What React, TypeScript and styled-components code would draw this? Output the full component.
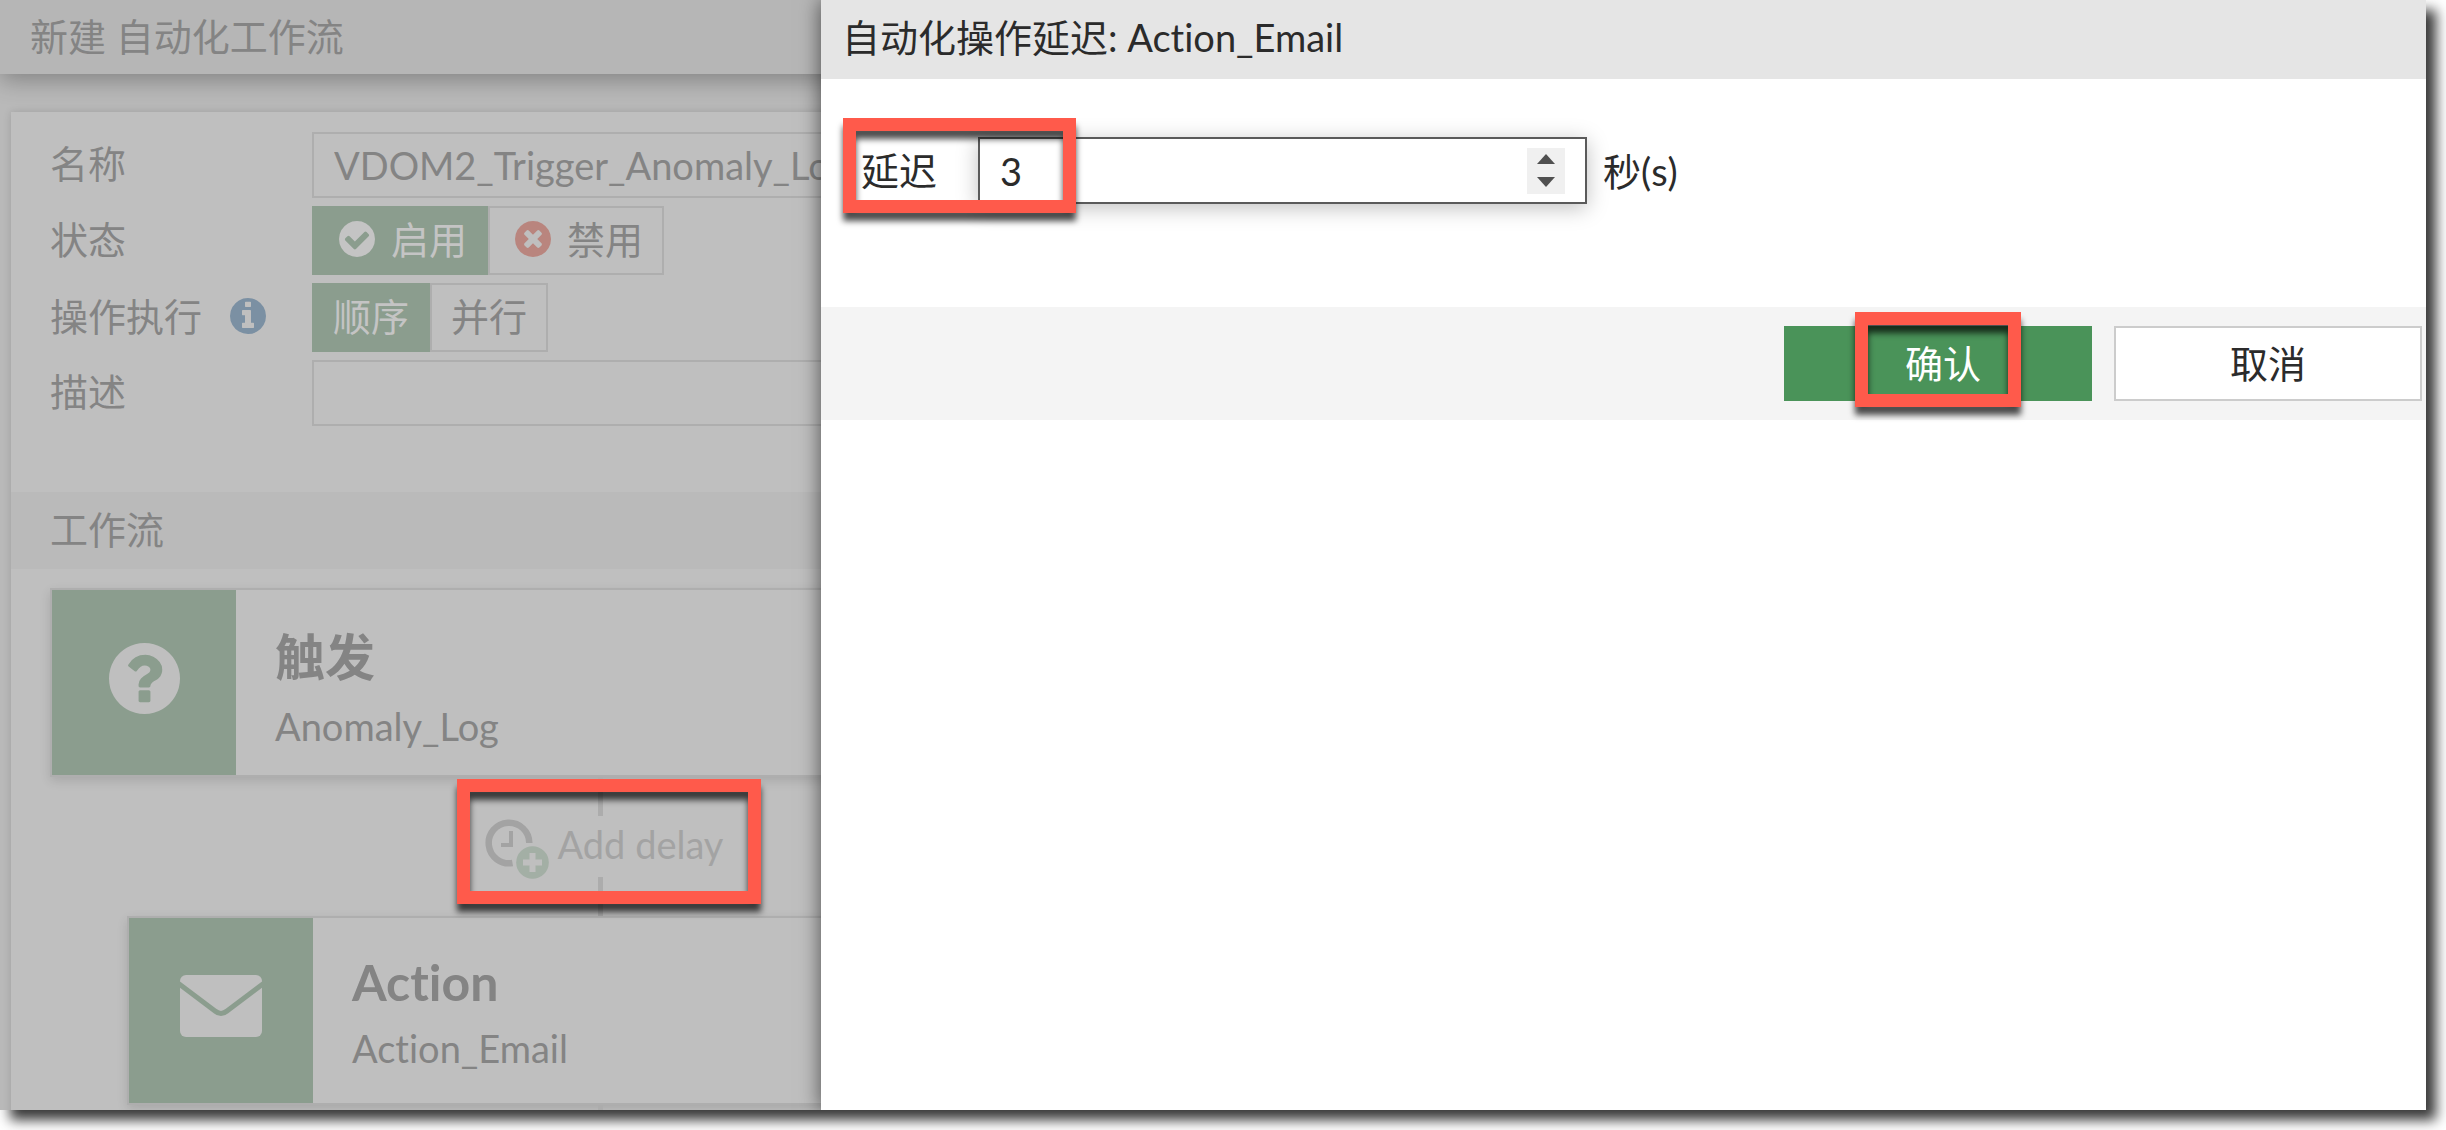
import React, { useState } from "react";
import styled, { createGlobalStyle } from "styled-components";

const GlobalStyle = createGlobalStyle`
  * { box-sizing: border-box; }
  body {
    margin: 0;
    background: #fff;
    font-family: Lato, "Noto Sans CJK SC", sans-serif;
    font-size: 38px;
    line-height: 48px;
    font-variant-ligatures: none;
    color: #2b2b2b;
  }
  button, input { font: inherit; color: inherit; }
`;

const Page = styled.div`
  height: 100vh;
  padding: 0 20px 20px 0;
  overflow: hidden;
`;

const Window = styled.div`
  position: relative;
  height: 100%;
  background: #b9b9b9;
  color: #848484;
  box-shadow: 10px 10px 12px rgba(0, 0, 0, 0.78);
`;

const Workspace = styled.main`
  height: 100%;
  overflow: hidden;
  display: flex;
  flex-direction: column;
`;

const PageHeader = styled.header`
  flex: none;
  height: 74px;
  padding: 12px 30px;
  background: #b6b6b6;
  box-shadow: 0 6px 24px rgba(0, 0, 0, 0.3);
`;

const Title = styled.h1`
  margin: 0;
  font-size: 38px;
  line-height: 48px;
  font-weight: 400;
`;

const Panel = styled.section`
  flex: none;
  margin: 38px 11px 0;
  padding-top: 20px;
  background: #bfbfbf;
  box-shadow: 0 0 8px rgba(0, 0, 0, 0.14);
`;

const Form = styled.form`
  display: grid;
  grid-template-columns: 262px 1fr;
  row-gap: 8px;
  align-items: center;
  padding: 0 39px 66px;
`;

const Label = styled.label`
  display: flex;
  align-items: center;
  gap: 28px;
  padding-bottom: 4px;
`;

const TextField = styled.input`
  width: 100%;
  height: 66px;
  padding: 0 20px;
  border: 2px solid #aeaeae;
  background: transparent;
  outline: none;
`;

const Segments = styled.div`
  display: flex;
`;

const Segment = styled.button<{ $on?: boolean }>`
  display: flex;
  align-items: center;
  gap: 16px;
  height: 69px;
  padding: 0 19px 3px;
  border: 2px solid ${(p) => (p.$on ? "#8b9d8e" : "#aeaeae")};
  background: ${(p) => (p.$on ? "#8b9d8e" : "transparent")};
  color: ${(p) => (p.$on ? "#c4c4c4" : "#848484")};
`;

const IconSegment = styled(Segment)`
  padding-left: 25px;
`;

const SectionTitle = styled.h2`
  margin: 0;
  height: 77px;
  padding: 13px 39px;
  background: #bababa;
  font-size: 38px;
  line-height: 48px;
  font-weight: 400;
`;

const Flow = styled.div`
  display: flex;
  flex-direction: column;
  width: 1101px;
  margin: 19px 39px 0;
`;

const Card = styled.article<{ $inset?: boolean }>`
  display: flex;
  height: 189px;
  margin: 0 ${(p) => (p.$inset ? 77 : 0)}px;
  border: 2px solid #aeaeae;
  box-shadow: 0 4px 10px rgba(0, 0, 0, 0.12);
`;

const CardIcon = styled.div`
  display: flex;
  align-items: center;
  justify-content: center;
  flex: none;
  width: 184px;
  padding-bottom: 9px;
  background: #8b9d8e;
  color: #bfbfbf;
`;

const CardText = styled.div`
  display: flex;
  flex-direction: column;
  justify-content: center;
  padding: 2px 39px 0;
`;

const CardTitle = styled.h3`
  margin: 0 0 12px;
  font-size: 50px;
  line-height: normal;
  font-weight: 700;
`;

const CardName = styled.p`
  margin: 0;
`;

const Connector = styled.div`
  display: flex;
  flex-direction: column;
  align-items: center;
  height: 139px;
`;

const Line = styled.span`
  flex: 1;
  width: 5px;
  background: #acacac;
`;

const AddDelay = styled.button`
  position: relative;
  display: flex;
  align-items: center;
  gap: 9px;
  height: 61px;
  padding: 0 0 0 7px;
  border: 0;
  background: none;
  color: #a3a3a3;
`;

const AddDelayText = styled.span`
  padding-bottom: 6px;
`;

const Marker = styled.span`
  position: absolute;
  border: 13px solid #ff5a4b;
  filter: drop-shadow(0 8px 3px rgba(0, 0, 0, 0.7));
  pointer-events: none;
`;

const DelayMarker = styled(Marker)`
  inset: -37px -38px -27px -21px;
`;

const Drawer = styled.aside`
  position: absolute;
  top: 0;
  bottom: 0;
  left: 821px;
  right: 0;
  background: #fff;
  color: #2b2b2b;
  box-shadow: 0 0 20px rgba(0, 0, 0, 0.6);
  clip-path: inset(0 0 0 -40px);
`;

const DrawerHeader = styled.header`
  height: 79px;
  padding: 13px 21px;
  background: #e5e5e5;
`;

const DelayRow = styled.div`
  display: flex;
  align-items: center;
  padding: 58px 24px 103px 22px;
`;

const DelayLabel = styled.label`
  position: relative;
  width: 135px;
  padding: 0 0 2px 18px;
`;

const NumberBox = styled.div`
  display: flex;
  align-items: center;
  width: 609px;
  height: 67px;
  margin-right: 16px;
  padding-right: 20px;
  border: 2px solid #5a5a5a;
  box-shadow: 0 4px 20px rgba(0, 0, 0, 0.25);
`;

const NumberInput = styled.input`
  flex: 1;
  min-width: 0;
  padding: 0 20px;
  border: 0;
  outline: none;
  background: transparent;
  appearance: textfield;
  &::-webkit-inner-spin-button { appearance: none; }
`;

const Stepper = styled.div`
  display: flex;
  flex-direction: column;
  width: 38px;
  height: 46px;
  background: #f0f0f0;
`;

const Step = styled.button`
  display: flex;
  align-items: center;
  justify-content: center;
  flex: 1;
  padding: 0;
  border: 0;
  background: none;
  color: #505050;
`;

const InputMarker = styled(Marker)`
  top: -28px;
  left: 0;
  width: 233px;
  height: 95px;
`;

const DrawerFooter = styled.footer`
  display: flex;
  justify-content: flex-end;
  gap: 22px;
  padding: 19px 4px;
  background: #f4f4f4;
`;

const Button = styled.button<{ $primary?: boolean }>`
  position: relative;
  width: 308px;
  height: 75px;
  padding: ${(p) => (p.$primary ? "0 0 2px 10px" : "0 0 2px")};
  border: ${(p) => (p.$primary ? "0" : "2px solid #cccccc")};
  background: ${(p) => (p.$primary ? "#4a9359" : "#fff")};
  color: ${(p) => (p.$primary ? "#fff" : "#2b2b2b")};
`;

const ConfirmMarker = styled(Marker)`
  inset: -14px 71px -6px;
`;

const DISC =
  "q0 209-103 385.5t-279.5 279.5-385.5 103-385.5-103-279.5-279.5-103-385.5 103-385.5 279.5-279.5 385.5-103 385.5 103 279.5 279.5 103 385.5z";

const GLYPHS = {
  check:
    "M1412 734q0-28-18-46l-91-90q-19-19-45-19t-45 19l-408 407-226-226q-19-19-45-19t-45 19l-91 90q-18 18-18 46 0 27 18 45l362 362q19 19 45 19 27 0 46-19l543-543q18-18 18-45zm252 162",
  times:
    "M1277 1122q0-26-19-45l-181-181 181-181q19-19 19-45 0-27-19-46l-90-90q-19-19-46-19-26 0-45 19l-181 181-181-181q-19-19-45-19-27 0-46 19l-90 90q-19 19-19 46 0 26 19 45l181 181-181 181q-19 19-19 45 0 27 19 46l90 90q19 19 46 19 26 0 45-19l181-181 181 181q19 19 45 19 27 0 46-19l90-90q19-19 19-46zm387-226",
  info:
    "M1152 1376v-160q0-14-9-23t-23-9h-96v-512q0-14-9-23t-23-9h-320q-14 0-23 9t-9 23v160q0 14 9 23t23 9h96v320h-96q-14 0-23 9t-9 23v160q0 14 9 23t23 9h448q14 0 23-9t9-23zm-128-896v-160q0-14-9-23t-23-9h-192q-14 0-23 9t-9 23v160q0 14 9 23t23 9h192q14 0 23-9t9-23zm640 416",
  question:
    "M1024 1376v-192q0-14-9-23t-23-9h-192q-14 0-23 9t-9 23v192q0 14 9 23t23 9h192q14 0 23-9t9-23zm256-672q0-88-55.5-163t-138.5-116-170-41q-243 0-371 213-15 24 8 42l132 100q7 6 19 6 16 0 25-12 53-68 86-92 34-24 86-24 48 0 85.5 26t37.5 59q0 38-20 61t-68 45q-63 28-115.5 86.5t-52.5 125.5v36q0 14 9 23t23 9h192q14 0 23-9t9-23q0-19 21.5-49.5t54.5-49.5q32-18 49-28.5t46-35 44.5-48 28-60.5 12.5-81zm384 192",
};

type DiscProps = { glyph: keyof typeof GLYPHS; size?: number; color?: string };

const DiscIcon = ({ glyph, size = 36, color = "currentColor" }: DiscProps) => (
  <svg width={size} height={size} viewBox="128 128 1536 1536" fill={color} aria-hidden="true">
    <path d={GLYPHS[glyph] + DISC} />
  </svg>
);

const ClockPlus = () => (
  <svg width="64" height="64" viewBox="0 0 64 64" aria-hidden="true">
    <path d="M27.5 48A20.3 20.3 0 1 1 44.3 28" fill="none" stroke="#a3a3a3" strokeWidth="6.5" />
    <path d="M26 16V30H16" fill="none" stroke="#a3a3a3" strokeWidth="4" />
    <circle cx="47.5" cy="47.5" r="16.3" fill="#a3afa5" />
    <path d="M47.5 38V57M38 47.5H57" stroke="#bfbfbf" strokeWidth="6" />
  </svg>
);

const Envelope = () => (
  <svg width="82" height="62" viewBox="0 0 82 62" aria-hidden="true">
    <rect width="82" height="62" rx="6" fill="currentColor" />
    <path d="M-2 8L35 36Q41 41 47 36L84 8" fill="none" stroke="#8b9d8e" strokeWidth="5" />
  </svg>
);

const Triangle = ({ down }: { down?: boolean }) => (
  <svg width="18" height="10" viewBox="0 0 18 10" aria-hidden="true">
    <path d={down ? "M0 0H18L9 10Z" : "M0 10H18L9 0Z"} fill="currentColor" />
  </svg>
);

export default function App() {
  const [delay, setDelay] = useState(3);
  return (
    <Page>
      <GlobalStyle />
      <Window>
        <Workspace>
          <PageHeader>
            <Title>新建 自动化工作流</Title>
          </PageHeader>
          <Panel>
            <Form>
              <Label htmlFor="name">名称</Label>
              <TextField id="name" defaultValue="VDOM2_Trigger_Anomaly_Log" />
              <Label as="span">状态</Label>
              <Segments>
                <IconSegment type="button" $on>
                  <DiscIcon glyph="check" />
                  启用
                </IconSegment>
                <IconSegment type="button">
                  <DiscIcon glyph="times" color="#b9857e" />
                  禁用
                </IconSegment>
              </Segments>
              <Label as="span">
                操作执行
                <DiscIcon glyph="info" color="#7b90a3" />
              </Label>
              <Segments>
                <Segment type="button" $on>顺序</Segment>
                <Segment type="button">并行</Segment>
              </Segments>
              <Label htmlFor="description">描述</Label>
              <TextField id="description" />
            </Form>
            <SectionTitle>工作流</SectionTitle>
            <Flow>
              <Card>
                <CardIcon><DiscIcon glyph="question" size={71} /></CardIcon>
                <CardText>
                  <CardTitle>触发</CardTitle>
                  <CardName>Anomaly_Log</CardName>
                </CardText>
              </Card>
              <Connector>
                <Line />
                <AddDelay type="button">
                  <ClockPlus />
                  <AddDelayText>Add delay</AddDelayText>
                  <DelayMarker />
                </AddDelay>
                <Line />
              </Connector>
              <Card $inset>
                <CardIcon><Envelope /></CardIcon>
                <CardText>
                  <CardTitle>Action</CardTitle>
                  <CardName>Action_Email</CardName>
                </CardText>
              </Card>
              <Connector>
                <Line />
              </Connector>
            </Flow>
          </Panel>
        </Workspace>
        <Drawer>
          <DrawerHeader>
            <Title as="h2">自动化操作延迟: Action_Email</Title>
          </DrawerHeader>
          <DelayRow>
            <DelayLabel htmlFor="delay">
              延迟
              <InputMarker />
            </DelayLabel>
            <NumberBox>
              <NumberInput
                id="delay"
                type="number"
                value={delay}
                onChange={(e) => setDelay(Number(e.target.value))}
              />
              <Stepper>
                <Step type="button" aria-label="+" onClick={() => setDelay(delay + 1)}>
                  <Triangle />
                </Step>
                <Step type="button" aria-label="-" onClick={() => setDelay(delay - 1)}>
                  <Triangle down />
                </Step>
              </Stepper>
            </NumberBox>
            秒(s)
          </DelayRow>
          <DrawerFooter>
            <Button type="button" $primary>
              确认
              <ConfirmMarker />
            </Button>
            <Button type="button">取消</Button>
          </DrawerFooter>
        </Drawer>
      </Window>
    </Page>
  );
}
